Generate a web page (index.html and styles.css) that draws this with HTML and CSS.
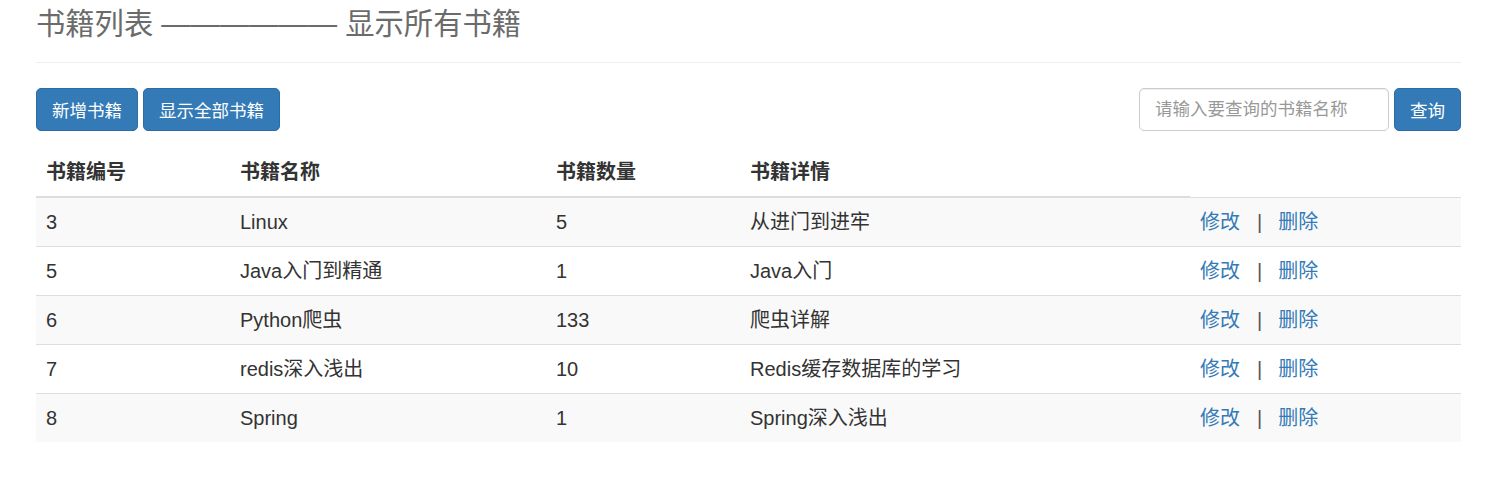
FILE: index.html
```html
<!DOCTYPE html>
<html lang="zh">
<head>
<meta charset="utf-8">
<title>书籍列表</title>
<link rel="stylesheet" href="styles.css">
</head>
<body>
<div class="container">
  <div class="page-header">
    <h1>书籍列表 —————— 显示所有书籍</h1>
  </div>
  <div class="toolbar">
    <div class="left">
      <a class="btn">新增书籍</a>
      <a class="btn">显示全部书籍</a>
    </div>
    <form class="search">
      <input class="search-input" type="text" placeholder="请输入要查询的书籍名称">
      <button class="btn" type="button">查询</button>
    </form>
  </div>
  <table class="table">
    <colgroup>
      <col class="c1"><col class="c2"><col class="c3"><col class="c4"><col class="c5">
    </colgroup>
    <thead>
      <tr><th>书籍编号</th><th>书籍名称</th><th>书籍数量</th><th>书籍详情</th></tr>
    </thead>
    <tbody>
      <tr><td>3</td><td>Linux</td><td>5</td><td>从进门到进牢</td><td><a class="link">修改</a><span class="sep">|</span><a class="link">删除</a></td></tr>
      <tr><td>5</td><td>Java入门到精通</td><td>1</td><td>Java入门</td><td><a class="link">修改</a><span class="sep">|</span><a class="link">删除</a></td></tr>
      <tr><td>6</td><td>Python爬虫</td><td>133</td><td>爬虫详解</td><td><a class="link">修改</a><span class="sep">|</span><a class="link">删除</a></td></tr>
      <tr><td>7</td><td>redis深入浅出</td><td>10</td><td>Redis缓存数据库的学习</td><td><a class="link">修改</a><span class="sep">|</span><a class="link">删除</a></td></tr>
      <tr><td>8</td><td>Spring</td><td>1</td><td>Spring深入浅出</td><td><a class="link">修改</a><span class="sep">|</span><a class="link">删除</a></td></tr>
    </tbody>
  </table>
</div>
</body>
</html>
```
FILE: styles.css
```css
* { box-sizing: border-box; }
body {
  margin: 0;
  background: #fff;
  color: #333;
  font-family: "Liberation Sans", "Noto Sans CJK SC", sans-serif;
  font-size: 17.5px;
}
.container {
  width: 1425px;
  margin-left: 36px;
}
.page-header {
  padding-top: 4px;
  padding-bottom: 18px;
  border-bottom: 1px solid #eee;
}
.page-header h1 {
  margin: 0;
  font-size: 29.3px;
  line-height: 40px;
  font-weight: 400;
  color: #6b6b6b;
}
.toolbar {
  margin-top: 25px;
  display: flex;
  justify-content: space-between;
  align-items: center;
}
.left { display: flex; gap: 5px; }
.search { display: flex; gap: 5px; margin: 0; }
.btn {
  display: inline-flex;
  align-items: center;
  justify-content: center;
  height: 43px;
  padding: 0 15px;
  background: #337ab7;
  border: 1px solid #2e6da4;
  border-radius: 5px;
  color: #fff;
  font-family: inherit;
  font-size: 17.5px;
  text-decoration: none;
  cursor: pointer;
}
.search-input {
  width: 250px;
  height: 43px;
  padding: 0 15px;
  border: 1px solid #ccc;
  border-radius: 5px;
  font-family: inherit;
  font-size: 17.5px;
  color: #555;
  box-shadow: inset 0 1px 1px rgba(0,0,0,.075);
}
.search-input::placeholder { color: #999; }
.table {
  margin-top: 17px;
  width: 1425px;
  border-collapse: collapse;
  table-layout: fixed;
  font-size: 20px;
}
.c1 { width: 194px; }
.c2 { width: 316px; }
.c3 { width: 194px; }
.c4 { width: 450px; }
.c5 { width: 271px; }
.table th {
  text-align: left;
  font-weight: 700;
  padding: 10px;
  line-height: 28px;
  border-bottom: 2px solid #ddd;
}
.table td {
  padding: 10px;
  line-height: 28px;
  border-top: 1px solid #ddd;
}
.table tbody tr:nth-child(odd) { background: #f9f9f9; }
.link { color: #337ab7; text-decoration: none; }
.sep { margin: 0 16px 0 17px; color: #555; }
```
